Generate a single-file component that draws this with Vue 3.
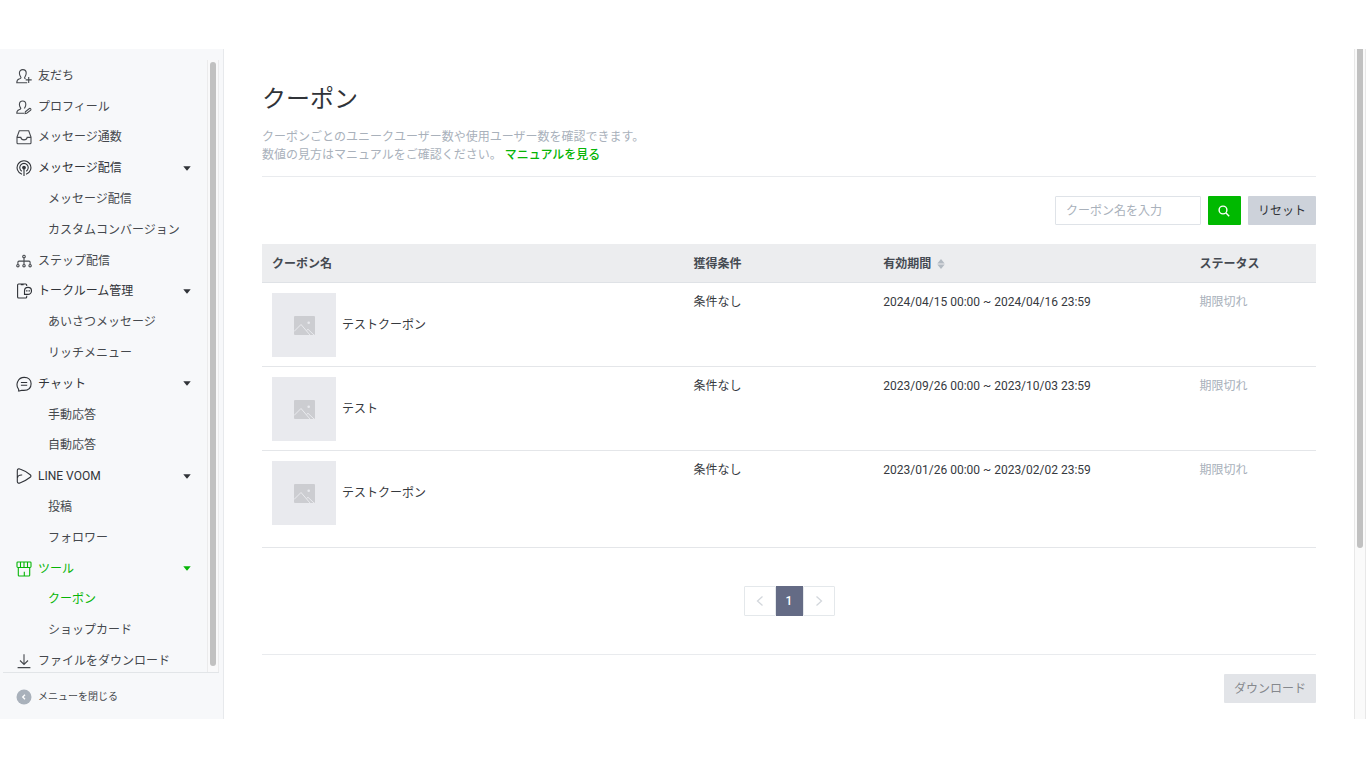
<script setup>
import { ref } from 'vue'

const menu = [
  { label: '友だち', icon: 'friend' },
  { label: 'プロフィール', icon: 'profile' },
  { label: 'メッセージ通数', icon: 'inbox' },
  { label: 'メッセージ配信', icon: 'broadcast', open: true },
  { label: 'メッセージ配信', sub: true },
  { label: 'カスタムコンバージョン', sub: true },
  { label: 'ステップ配信', icon: 'step' },
  { label: 'トークルーム管理', icon: 'room', open: true },
  { label: 'あいさつメッセージ', sub: true },
  { label: 'リッチメニュー', sub: true },
  { label: 'チャット', icon: 'chat', open: true },
  { label: '手動応答', sub: true },
  { label: '自動応答', sub: true },
  { label: 'LINE VOOM', icon: 'voom', open: true },
  { label: '投稿', sub: true },
  { label: 'フォロワー', sub: true },
  { label: 'ツール', icon: 'shop', open: true, active: true },
  { label: 'クーポン', sub: true, active: true },
  { label: 'ショップカード', sub: true },
  { label: 'ファイルをダウンロード', icon: 'download' },
]

const coupons = [
  { name: 'テストクーポン', condition: '条件なし', period: '2024/04/15 00:00 ~ 2024/04/16 23:59', status: '期限切れ' },
  { name: 'テスト', condition: '条件なし', period: '2023/09/26 00:00 ~ 2023/10/03 23:59', status: '期限切れ' },
  { name: 'テストクーポン', condition: '条件なし', period: '2023/01/26 00:00 ~ 2023/02/02 23:59', status: '期限切れ' },
]

const keyword = ref('')
</script>

<template>
  <div class="shell">
    <aside class="sidebar">
      <div class="nav-area">
        <nav class="nav" aria-label="メニュー">
          <ul class="menu">
            <li v-for="(item, i) in menu" :key="i">
              <a href="#" class="item" :class="{ sub: item.sub, active: item.active, parent: item.open }">
                <svg v-if="item.icon" class="icon" viewBox="0 0 16 16" aria-hidden="true">
                  <template v-if="item.icon === 'friend'">
                    <path d="M11.200 14.700H.8c0-2.200.7-3.100 2.300-3.600 1.300-.4 1.900-.7 1.900-1.400 0-.8-1.600-1.600-1.600-4.600 0-2.200 1.300-3.500 3.400-3.500s3.400 1.300 3.400 3.500c0 3-1.600 3.800-1.600 4.600 0 .5.300.8.900 1.100M12.700 8.900v6M9.700 11.900h6" />
                  </template>
                  <template v-else-if="item.icon === 'profile'">
                    <path d="M8 14.300H.8c0-2.100.7-3 2.300-3.500 1.200-.4 1.700-.6 1.700-1.300 0-.8-1.400-1.500-1.400-4.100 0-2.200 1.200-3.400 3.200-3.400s3.200 1.200 3.200 3.400c0 2.500-1.300 3.300-1.400 4.100M9.400 12.700l4-3.200c1-.5 2 .7 1.300 1.600l-4 3.200-1.700.2z" />
                  </template>
                  <template v-else-if="item.icon === 'inbox'">
                    <path d="M3.300 1.700h9.400L15 8v5.700c0 .6-.4 1-1 1H2c-.6 0-1-.4-1-1V8zM1 8.400h3.800c.3 1.700 1.300 2.500 3.200 2.500s2.900-.8 3.200-2.500H15" />
                  </template>
                  <template v-else-if="item.icon === 'broadcast'">
                    <path d="M6 14.300A6.900 6.900 0 1 1 10 14.300M5.800 11.200A4.200 4.200 0 1 1 10.200 11.200M8 7.600V16" />
                    <circle class="solid" cx="8" cy="7.600" r="1.300" />
                  </template>
                  <template v-else-if="item.icon === 'step'">
                    <path d="M8 5v6.500M1.900 11.500V9.300c0-.8.300-1.200 1.100-1.200h10c.8 0 1.100.4 1.100 1.200v2.200" />
                    <circle cx="8" cy="3.500" r="1.300" />
                    <circle cx="1.900" cy="12.700" r="1.200" />
                    <circle cx="8" cy="12.700" r="1.200" />
                    <circle cx="14.100" cy="12.700" r="1.200" />
                  </template>
                  <template v-else-if="item.icon === 'room'">
                    <path d="M10.700 3V2c0-.7-.3-1-1-1H2.600c-.7 0-1 .3-1 1v12c0 .7.300 1 1 1h7.100c.7 0 1-.3 1-1v-1.200M4.800 1.700h2.800M8.500 11.400V7.900A3.500 3.500 0 1 1 12 11.400z" />
                    <path d="M9.900 7.900h1M11.500 7.900h1M13.100 7.900h1" />
                  </template>
                  <template v-else-if="item.icon === 'chat'">
                    <path d="M2.600 15c.3-1 .1-1.700-.3-2.300C-.7 8.300 1.900 1.400 8.200 1.400c4.300 0 6.900 2.800 6.900 6.400 0 3.900-2.700 6.600-7.200 6.600H5.600c-1.200 0-1.800.6-3 .6zM4.900 6.500h6.300M4.900 9.300h6.300" />
                  </template>
                  <template v-else-if="item.icon === 'voom'">
                    <path d="M1.300 13.500V2.700C1.300 1 2.500.5 3.900 1.100c4 1.400 7.600 3.400 10.300 5.600 1 .8 1 1.800 0 2.600-2.700 2.200-6.300 4.200-10.300 5.600-1.400.6-2.600.1-2.600-1.400zM1.500 10c.1-2.100 1.700-3.300 4.700-3" />
                  </template>
                  <template v-else-if="item.icon === 'shop'">
                    <path d="M1.800 1h12.400c.5 0 .8.300.8.800v3.800c0 .6-.3.900-.9.900H1.900c-.6 0-.9-.3-.9-.9V1.800C1 1.300 1.300 1 1.800 1zM4.500 1v5.500M8 1v5.500M11.500 1v5.500M2.300 6.500v7.700c0 .5.300.8.800.8h9.800c.5 0 .8-.3.800-.8V6.500M8.300 15v-4.300" />
                  </template>
                  <template v-else>
                    <path d="M8 1.300v10M4 7.500l4 4 4-4M1.600 14.600h12.800" />
                  </template>
                </svg>
                <span class="label">{{ item.label }}</span>
                <svg v-if="item.open" class="caret" viewBox="0 0 8 5" aria-hidden="true"><path d="M.3.3h7.400L4.500 4.200a.7.700 0 0 1-1 0z" /></svg>
              </a>
            </li>
          </ul>
        </nav>
        <div class="nav-track"><div class="nav-thumb"></div></div>
      </div>
      <button type="button" class="collapse">
        <svg viewBox="0 0 16 16" aria-hidden="true"><circle cx="8" cy="8" r="7.500" /><path d="M9 5.700L6.700 8 9 10.300" /></svg>
        <span>メニューを閉じる</span>
      </button>
    </aside>

    <main class="content">
      <header class="head">
        <h1>クーポン</h1>
        <p>クーポンごとのユニークユーザー数や使用ユーザー数を確認できます。<br />数値の見方はマニュアルをご確認ください。 <a href="#">マニュアルを見る</a></p>
      </header>

      <form class="search" @submit.prevent>
        <input v-model="keyword" type="text" placeholder="クーポン名を入力" aria-label="クーポン名を入力" />
        <button type="submit" class="find" aria-label="検索">
          <svg viewBox="0 0 12 12" aria-hidden="true"><circle cx="5" cy="5" r="3.900" /><path d="M8 8l3.200 3.200" /></svg>
        </button>
        <button type="button" class="reset" @click="keyword = ''">リセット</button>
      </form>

      <table class="coupons">
        <thead>
          <tr>
            <th class="c-name" scope="col">クーポン名</th>
            <th class="c-cond" scope="col">獲得条件</th>
            <th class="c-period" scope="col">
              有効期間<svg class="sort" viewBox="0 0 8 10" aria-hidden="true"><path d="M4 0l3.700 4.400H.3zM4 10L.3 5.600h7.400z" /></svg>
            </th>
            <th class="c-status" scope="col">ステータス</th>
          </tr>
        </thead>
        <tbody>
          <tr v-for="(c, i) in coupons" :key="i">
            <td>
              <div class="coupon">
                <span class="thumb">
                  <svg viewBox="0 0 21 19" aria-hidden="true">
                    <rect width="21" height="19" rx="1" />
                    <path d="M0 15.500L7 8.500l9 10.500M12.500 14.500l1.500-1.200L20 19" />
                    <circle cx="14.700" cy="6.800" r="1.300" />
                  </svg>
                </span>
                <span>{{ c.name }}</span>
              </div>
            </td>
            <td>{{ c.condition }}</td>
            <td>{{ c.period }}</td>
            <td class="expired">{{ c.status }}</td>
          </tr>
        </tbody>
      </table>

      <nav class="pager" aria-label="ページ">
        <button type="button" aria-label="前へ" disabled><svg viewBox="0 0 8 12" aria-hidden="true"><path d="M6.500 1.500L1.500 6l5 4.500" /></svg></button>
        <button type="button" class="current" aria-current="page">1</button>
        <button type="button" aria-label="次へ" disabled><svg viewBox="0 0 8 12" aria-hidden="true"><path d="M1.500 1.500l5 4.500-5 4.500" /></svg></button>
      </nav>

      <footer class="actions">
        <button type="button" disabled>ダウンロード</button>
      </footer>
    </main>

    <div class="page-track"><div class="page-thumb"></div></div>
  </div>
</template>

<style>
body {
  background: #fff;
}
</style>

<style scoped>
.shell,
.shell * {
  box-sizing: border-box;
}
.shell {
  display: flex;
  height: 100vh;
  padding: 49px 0;
  font-family: Roboto, "Noto Sans CJK JP", sans-serif;
  font-size: 12px;
  line-height: 18px;
  color: #36393e;
}
button,
input {
  font: inherit;
  margin: 0;
  border-radius: 1px;
}
.sidebar {
  display: flex;
  flex: none;
  flex-direction: column;
  width: 224px;
  border-right: 1px solid #e7e9ec;
  background: #f7f8fa;
}
.nav-area {
  display: flex;
  flex: 1;
  min-height: 0;
  margin: 0 4px 0 3px;
  border-bottom: 1px solid #e2e5e8;
}
.nav {
  flex: 1;
  overflow: hidden;
}
.menu {
  display: grid;
  grid-auto-rows: 1fr;
  min-height: 616px;
  margin: 11px 0 0;
  padding: 0;
  list-style: none;
}
.item {
  display: flex;
  align-items: center;
  height: 100%;
  padding: 1px 16px 0 13px;
  color: #45484d;
  text-decoration: none;
  white-space: nowrap;
}
.item.parent {
  color: #303338;
}
.item.sub {
  padding-left: 45px;
}
.item.active {
  color: #06b506;
}
.icon {
  flex: none;
  width: 16px;
  height: 16px;
  margin-right: 6px;
  fill: none;
  stroke: currentColor;
  stroke-width: 1.1;
}
.icon .solid {
  fill: currentColor;
}
.label {
  flex: 1;
}
.caret {
  width: 8px;
  height: 5px;
  fill: currentColor;
}
.nav-track {
  flex: none;
  width: 12px;
  margin-top: 11px;
  padding: 2px 2px 6px;
  border: solid #ebebec;
  border-width: 0 1px;
  background: #f9f9fa;
}
.nav-thumb {
  width: 6px;
  height: 100%;
  margin: 0 auto;
  border-radius: 3px;
  background: #c1c1c1;
}
.collapse {
  display: flex;
  flex: none;
  align-items: center;
  gap: 6px;
  height: 46px;
  padding: 2px 16px 0;
  border: 0;
  background: none;
  color: #45484d;
  font-size: 10px;
}
.collapse svg {
  width: 16px;
  height: 16px;
  fill: #a9b1bb;
}
.collapse path {
  fill: none;
  stroke: #fff;
  stroke-width: 1.3;
}
.content {
  flex: 1;
  min-width: 0;
  padding: 31px 38px 0;
}
.head {
  padding-bottom: 12px;
  border-bottom: 1px solid #e9ebee;
}
h1 {
  margin: 0 0 10px;
  font-size: 24px;
  font-weight: 400;
  line-height: 38px;
  color: #303338;
}
.head p {
  margin: 0;
  color: #a9b1bb;
}
.head a {
  color: #06b506;
  font-weight: 500;
  text-decoration: none;
}
.search {
  display: flex;
  justify-content: flex-end;
  gap: 7px;
  margin: 19px 0;
}
.search input {
  width: 146px;
  height: 29px;
  padding: 0 10px;
  border: 1px solid #dfe3e8;
  background: #fff;
  color: #303338;
  outline: 0;
}
.search input::placeholder {
  color: #a9b1bb;
}
.find {
  display: grid;
  place-items: center;
  width: 33px;
  padding: 0;
  border: 0;
  background: #00b900;
}
.find svg {
  width: 12px;
  height: 12px;
  fill: none;
  stroke: #fff;
  stroke-width: 1.4;
}
.reset {
  padding: 0 10px;
  border: 0;
  background: #cdd2da;
  color: #303338;
}
.coupons {
  width: 100%;
  table-layout: fixed;
  border-collapse: separate;
  border-spacing: 0;
}
.coupons th {
  height: 39px;
  padding: 2px 10px 0;
  border-bottom: 1px solid #dfe2e6;
  background: #ecedef;
  color: #454a52;
  font-weight: 700;
  text-align: left;
}
.c-name {
  width: 40%;
}
.c-cond {
  width: 18%;
}
.c-period {
  width: 30%;
}
.c-status {
  width: 12%;
}
.sort {
  width: 8px;
  height: 10px;
  margin-left: 6px;
  vertical-align: -1px;
  fill: #b3bac2;
}
.coupons td {
  height: 84px;
  padding: 10px 10px 9px;
  border-bottom: 1px solid #e4e6e9;
  vertical-align: top;
}
.coupons tbody tr:last-child td {
  height: 97px;
}
.coupons .expired {
  color: #a9b1bb;
}
.coupon {
  display: flex;
  align-items: center;
  gap: 6px;
}
.thumb {
  display: grid;
  place-items: center;
  width: 64px;
  height: 64px;
  background: #e9eaee;
}
.thumb svg {
  width: 21px;
  height: 19px;
  fill: #cccdd1;
}
.thumb path {
  fill: none;
  stroke: #e9eaee;
}
.thumb circle {
  fill: #e9eaee;
}
.pager {
  display: flex;
  justify-content: center;
  height: 30px;
  margin: 38px 0;
}
.pager button {
  display: grid;
  place-items: center;
  width: 32px;
  padding: 0;
  border: 1px solid #e4e8eb;
  background: #fff;
}
.pager .current {
  width: 27px;
  border-color: #646b85;
  border-radius: 0;
  background: #646b85;
  color: #fff;
  font-weight: 500;
}
.pager svg {
  width: 8px;
  height: 12px;
  fill: none;
  stroke: #d3d7dc;
  stroke-width: 1.3;
}
.actions {
  display: flex;
  justify-content: flex-end;
  padding-top: 19px;
  border-top: 1px solid #e9ebee;
}
.actions button {
  height: 29px;
  padding: 0 10px;
  border: 0;
  background: #e2e4e8;
  color: #85888d;
}
.page-track {
  flex: none;
  width: 12px;
  border: solid #e8e8e8;
  border-width: 0 1px;
  background: #fafafa;
}
.page-thumb {
  width: 6px;
  height: 74.5%;
  margin: 0 auto;
  border-radius: 0 0 3px 3px;
  background: #c1c1c1;
}
</style>
